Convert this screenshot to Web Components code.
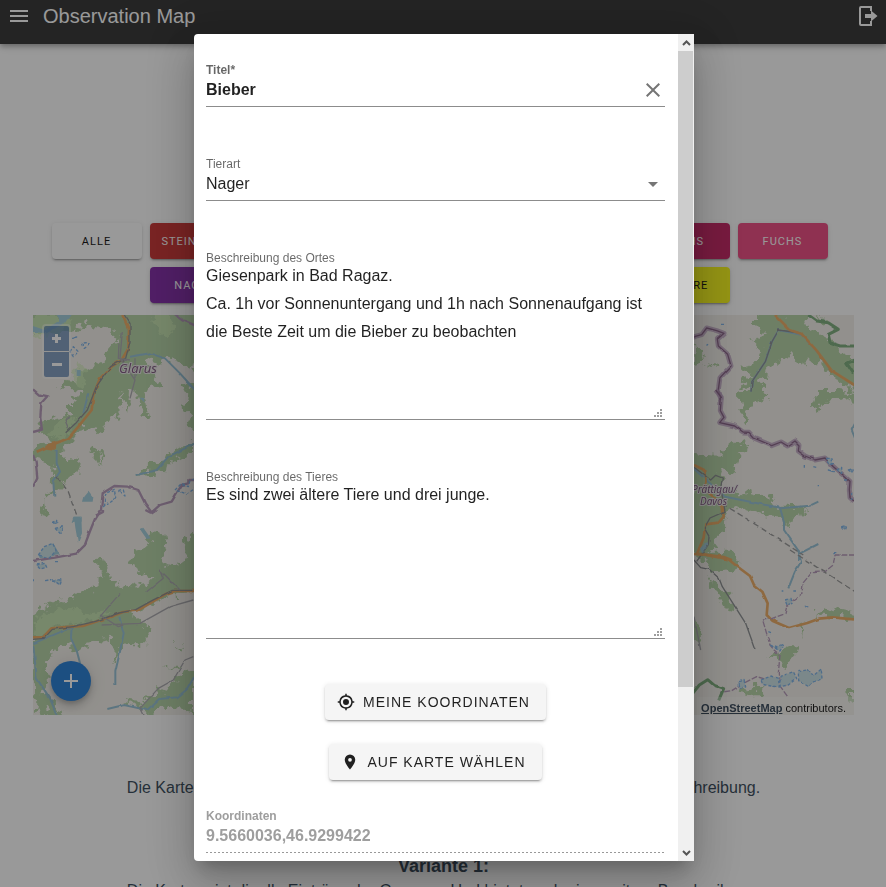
<!DOCTYPE html>
<html lang="de">
<head>
<meta charset="utf-8">
<meta name="viewport" content="width=device-width, initial-scale=1">
<title>Observation Map</title>
<style>
html, body { height: 100%; }
body { margin: 0; overflow: hidden; background: #fff; color: #2c3e50; font: 16px/24px "Liberation Sans", Arial, sans-serif; }
</style>
</head>
<body>
<observation-app></observation-app>
<script>
function define(name, html, setup) {
  const template = document.createElement('template');
  template.innerHTML = html;
  customElements.define(name, class extends HTMLElement {
    constructor() {
      super();
      this.attachShadow({ mode: 'open' }).append(template.content.cloneNode(true));
    }
    connectedCallback() { if (setup) setup(this, this.shadowRoot); }
  });
}

define('app-bar', `
<style>
:host { display: block; position: relative; background: #272727; color: #fff; box-shadow: 0 2px 4px -1px rgba(0,0,0,.2), 0 4px 5px rgba(0,0,0,.14), 0 1px 10px rgba(0,0,0,.12); }
header { display: flex; align-items: center; height: 32px; padding: 0 7px 12px 8px; gap: 13px; }
button { border: 0; padding: 0; background: none; color: inherit; width: 22px; height: 24px; display: grid; place-items: center; }
h1 { margin: 0; flex: 1; font-size: 20px; line-height: 24px; font-weight: 400; }
svg { display: block; fill: currentColor; }
</style>
<header>
  <button aria-label="Menü"><svg width="18" height="12" viewBox="0 0 18 12"><path d="M0 0h18v2H0zM0 5h18v2H0zM0 10h18v2H0z"/></svg></button>
  <h1><slot></slot></h1>
  <button aria-label="Abmelden"><svg width="20" height="20" viewBox="0 0 20 20"><path d="M14 0H3Q1 0 1 2v16q0 2 2 2h11v-5h-2v3H3V2h9v3h2z"/><path d="M7 8h6V4.500l6.500 5.500-6.500 5.500V12H7z"/></svg></button>
</header>`);

define('filter-button', `
<style>
:host { display: block; }
button { width: 100%; height: 36px; border: 0; border-radius: 4px; padding: 2px 12px 0; overflow: hidden; white-space: nowrap; background: var(--fill, #fff); color: var(--ink, #fff); font: 11px/16px Roboto, sans-serif; letter-spacing: 1px; box-shadow: 0 3px 1px -2px rgba(0,0,0,.2), 0 2px 2px rgba(0,0,0,.14), 0 1px 5px rgba(0,0,0,.12); }
</style><button><slot></slot></button>`);

define('filter-bar', `
<style>
:host { display: grid; grid-template-columns: repeat(8, 90px); justify-content: center; gap: 8px; padding-right: 8px; }
</style><slot></slot>`);

define('terrain-map', `
<style>
:host { display: block; position: relative; height: 400px; background: #f2efe9; overflow: hidden; }
.terrain { display: block; width: 100%; height: 100%; }
.zoom { position: absolute; left: 9px; top: 9px; padding: 2px; border-radius: 4px; background: rgba(255,255,255,.4); display: grid; gap: 1px; }
.zoom button { width: 25px; height: 25px; border: 0; padding: 0; background: rgba(0,60,136,.5); color: #fff; display: grid; place-items: center; }
.zoom button:first-child { border-radius: 2px 2px 0 0; }
.zoom button:last-child { border-radius: 0 0 2px 2px; }
.add { position: absolute; left: 18px; bottom: 14px; width: 40px; height: 40px; border: 0; padding: 0; border-radius: 50%; background: #1976d2; color: #fff; display: grid; place-items: center; box-shadow: 0 3px 5px -1px rgba(0,0,0,.2), 0 6px 10px rgba(0,0,0,.14), 0 1px 18px rgba(0,0,0,.12); }
button svg { fill: currentColor; display: block; }
.credit { position: absolute; right: 0; bottom: 0; padding: 4px 8px 0 4px; background: rgba(255,255,255,.3); color: #000; font-size: 11px; line-height: 14px; white-space: nowrap; }
.credit a { color: #2c3e50; font-weight: 700; }
.wood { fill: #b0d0a0; stroke: none; }
.meadow { fill: #cdebb0; opacity: .6; }
.water { stroke: #8fbdd2; fill: none; stroke-width: 6; }
.lake { fill: #9cc9d8; stroke: none; }
.edge { stroke: #b093b4; stroke-width: 7; fill: none; }
.wide { stroke: #ae8fb3; stroke-width: 15; opacity: .7; fill: none; }
.thin { stroke: #80597f; stroke-width: 4; fill: none; }
.road { stroke: #eba75c; stroke-width: 8; fill: none; }
.casing { stroke: #85888b; stroke-width: 4; fill: none; }
.minor { stroke: #a6a5aa; stroke-width: 4; fill: none; }
.glacier { stroke: #77aee5; stroke-width: 4; stroke-dasharray: 9 6; fill: #c8dfe3; }
.dash { stroke: #929292; stroke-width: 4; stroke-dasharray: 18 10; fill: none; }
.park { stroke: #75a975; stroke-width: 9; fill: none; }
text { font-family: "Noto Sans", sans-serif; font-style: italic; font-weight: 400; fill: #775078; stroke: #e8e5e5; stroke-width: 2px; paint-order: stroke; }
</style>
<svg class="terrain" viewBox="33 315 821 400" preserveAspectRatio="none" aria-label="Karte" stroke-linejoin="round" stroke-linecap="butt">
<defs>
<filter id="rough" x="-5%" y="-5%" width="110%" height="110%"><feTurbulence type="fractalNoise" baseFrequency=".11" numOctaves="3" seed="8"/><feDisplacementMap in="SourceGraphic" scale="17" xChannelSelector="R" yChannelSelector="G"/></filter>
<filter id="wobble" color-interpolation-filters="sRGB"><feTurbulence type="fractalNoise" baseFrequency=".12" numOctaves="1" seed="3"/><feDisplacementMap in="SourceGraphic" scale="3" xChannelSelector="R" yChannelSelector="G"/></filter>
</defs>
<g filter="url(#rough)">
<g transform="translate(20 310) scale(.33333)">
<path class="wood" d="M20 0H540V175L490 165 440 150 380 160 400 205 430 225 390 235 375 265 388 320 362 310 350 245 330 235 328 305 310 285 300 240 298 325 255 335 235 370 190 350 160 390 130 410 120 440 180 445 175 490 130 510 118 545 75 565 80 610 60 625 70 575 98 535 100 465 40 450V420L90 385 60 350 75 330 150 315 150 280 195 240 110 235 140 210 180 215 170 185 230 170 240 150 295 85 262 60 200 45 150 60 30 75Z"/>
<path class="wood" d="M490 225 540 220V370L500 350 515 320 480 290 510 265ZM350 500 400 455 440 440 522 390V420L460 455 410 497ZM218 405l25 15-5 45-20-10ZM238 430l15 20-5 15Z"/>
<path class="meadow" d="M30 15h90l40 20-50 35-80 15ZM150 190l30-30 20 30-5 40-25-15ZM90 370l30-40 50-10-20 50-30 20ZM400 15h40l30 50-40 10Z"/>
</g>
<g transform="translate(20 510) scale(.33333)">
<path class="wood" d="M30 325 100 280 170 260 225 225 250 200 225 150 250 145 270 205 320 230 390 215 400 205 330 165 345 120 385 110 390 65 430 70 440 125 430 160 480 175 500 90 540 40V255L430 260 380 290 330 310 380 350 390 400 320 400 280 460 285 400 275 380 200 400 165 425 150 400 100 425 75 460 90 500 65 540 105 570 135 620H90L40 560Z"/>
<path class="wood" d="M305 570 360 575 430 540 522 470V600L430 590 390 620 370 595ZM465 405l25 5-12 15ZM430 470l45 0-10 8ZM40 600l20-10-5 20Z"/>
<path class="meadow" d="M50 320l120-30 20 25 90-15-60 30-120 20-60 30Z"/>
</g>
<g transform="translate(675 210) scale(.33333)">
<path class="wood" d="M240 310H470L400 320 390 345 465 390 550 470V550L490 510 450 480 400 440 380 470 350 430 300 470 260 500 255 575 195 575 220 530 190 530 225 490 200 465 240 455 250 410 230 390 270 375 240 345Z"/>
<path class="wood" d="M50 400 90 435 55 480ZM90 460l45 5-15 8ZM420 315l40 20-20 10Z"/>
</g>
<g transform="translate(675 390) scale(.33333)">
<path class="wood" d="M190 0h65l30 20-60 25-5 55-15-10-10-40ZM410 50 430 0h60l60 10v25l-50-15-40 10-30 30ZM40 195 130 200 180 155 210 155 220 180 190 190 180 245 130 240 150 300 220 305 290 325 310 350 380 350 400 365 350 385 340 425 320 380 260 375 190 350 150 370 160 395 130 430 120 470 80 500 50 490Z"/>
</g>
<g transform="translate(675 550) scale(.33333)">
<path class="wood" d="M50 5h120l30 35-30 15-55 10-20-30-40-15ZM50 190l35 60-20 30-25-20ZM410 200l60-30 80 20v20l-100-10ZM100 80l70 60 5 40-25-5-40-70ZM280 320l80-35 10 20-40 35ZM190 430l50-30 30 10-30 30ZM510 420h30v30ZM378 230l12 5-2 20Z"/>
</g></g>
<g filter="url(#wobble)">
<g transform="translate(20 310) scale(.33333)">
<path class="lake" d="M30 45 75 60 120 30 110 15h45l-15 20-60 35-50-5ZM190 560l15-18 15 20-2 13h-32ZM160 620h25v15h-30ZM170 180h12v18h-12ZM358 263h20l-5 14Z"/>
<path class="water" d="M110 420v40l10 25-20 30 3 45M350 495l60-15 35-40 80-40M330 140l60-10 45 15 45 45 45 50M205 250l-15 60"/>
<path class="edge" d="M39 238l18 16 25 5-18 20-3 45 5 35-27 7M39 435l8 20 5 50-13 25M225 630l18-30 5-50 35-22 40 2 32 10 20 40 20 27 25-22 35-10 30-50 20-5v-10h40M465 13l25 18 35 15"/>
<path class="road" d="M307 15l20 45-2 55-20 35-30 20-35 35-20 50-5 45-40 50-30 35-50 20-45 20"/>
<path class="lake" style="fill:#eba75c" d="M75 405l35-12-3 30-25-3Z"/>
<path class="casing" d="M313 15l17 25v55l-13 50-45 25-43 60-27 70-35 40-30 28"/>
<path class="minor" d="M307 65l-7 80 45 65-15 55M345 145v60M145 355l-10-25 15-10M330 150l-35-5 2-45"/>
<path class="dash" d="M110 500l35 45 25 70"/>
<g class="glacier" style="fill:none"><path d="M150 125l10-15 15 15-15 15ZM185 100l8 15 15-10-10-7ZM155 85l15-4ZM250 590l8-40 25-12 4 25-22 15ZM295 545l15-5 5 18ZM465 540l20-20 20 10 5-18 20-10v30l-30 20Z"/></g>
</g>
<g transform="translate(20 510) scale(.33333)">
<path class="edge" d="M39 153l65-10 65-12 25-25 15-40 20-50 20-10V0M376 0l16 8 14-8"/>
<path class="lake" d="M162 20h22l2 50-12 28-8-45ZM55 135l45-35 20 35-60 10ZM360 58l10-5 22 32-12 2Z"/>
<path class="water" d="M155 350l-2 35 18 40 12 45M298 320l13 50-10 50-15 65v40M40 405l10 100 40 60 20 50M40 400l120-50M262 597l50-12 70 15 35-33 55-5 30-25 20-35"/>
<path class="road" d="M39 382h30l25-27 60-5 35-2 90-30 30-12 45-5 85-50 25-8h60"/>
<path class="casing" d="M39 388l33-3 25-27 65-9 65-15 70-25 50-10 50-28 60-30h60"/>
<path class="minor" d="M240 320l60-70M245 345l115-5 90-50 70-20M380 245l50-40-10-25 60 60M240 315l55 35 15-5M360 595l55-60 45-25 35-60 25-10M360 590l12 25"/>
<g class="glacier"><path d="M55 135l18-25 25-10 10 22-20 22ZM105 55l25-5-10 20ZM98 38l15-7v10ZM50 165l25-5 5 12-20 5ZM75 212l20-3ZM100 210l25 0-5 15ZM40 205v10M105 155h15"/></g>
</g>
<g transform="translate(675 210) scale(.33333)">
<path class="wide" d="M50 382l30-8 15-20 30 8 22 8-20 18 3 20 28 25 10 35-33 35-5 35 8 32"/><path class="thin" d="M50 382l30-8 15-20 30 8 22 8-20 18 3 20 28 25 10 35-33 35-5 35 8 32"/>
<path class="water" d="M228 545l3-30 40-60 20-60 20-35 70 15 50 55 40 55"/><path class="casing" d="M228 545l3-30 40-60 20-60 20-35 65 9"/>
<path class="road" d="M300 315l45 45 35 12 45 50 45 60 68 43"/>
<path class="park" d="M400 315l25 18 35 5 30 20-30 15 5 25 30 10h45M540 450l-25 10 20 30"/><path class="glacier" d="M95 410l5-8M138 343h10"/>
</g>
<g transform="translate(675 390) scale(.33333)">
<path class="wide" d="M122 0l17 22-3 40 11 20-13 16 45 10 25 18 18 1 15 17 53 23 28-11 20 12 22-15 12 12-2 18 20 15 30 12 30-6 25 26 30 26 20 18-2 25 2 24 12 10"/><path class="thin" d="M122 0l17 22-3 40 11 20-13 16 45 10 25 18 18 1 15 17 53 23 28-11 20 12 22-15 12 12-2 18 20 15 30 12 30-6 25 26 30 26 20 18-2 25 2 24 12 10"/>
<path class="water" d="M55 235l55 50 40 35 75 15 90 18 12 42 0 25 45 65v25M315 355l90-8 25-12M375 490l55-28M540 100l-10 20 12 30"/>
<path class="road" d="M57 225l30 15 5 35-7 20 35 30 23 25 3 30-15 18-40 5-5 40-20 48 80 10 25 10"/>
<path class="casing" d="M57 232l50 38 15-14 20 8-5 30 8 40 5 30-45 20-17 30 14 25-2 25-35 50"/>
<path class="dash" d="M140 340l65 40 180 115"/><path class="lake" d="M75 475l22-20 3 10-18 25Z"/>
<g class="glacier"><path d="M455 205l15 0 5 15-10 5ZM460 240l15 5ZM485 240l15-8v18ZM520 240l12-4-2 12ZM510 270l15 0M388 225v8M415 230l12 3M430 285v4M500 410l12-3-3 12ZM530 310v20"/></g>
</g>
<g transform="translate(675 550) scale(.33333)">
<path class="road" d="M55 12l40 3 65 13 25 20 40 30 12 27 25 20 16 35-3 35 17 17 50 22 55-15 35-13 40-4 65 6"/>
<path class="casing" d="M57 30l20 23 25 5 30 27 10 25 70 110 28 78"/><path class="minor" d="M57 200l20 100"/>
<path class="water" d="M370 0l8 35-18 30-20 50"/>
<path class="edge" style="stroke-width:4;stroke-dasharray:18 5" d="M540 15l-60 0-5 30-25 20-40 3-25 30-5 35-25 18-20 20-5 20-40 15-27 4 22 75 12 15 18 15-5 55 3 35 25 35M335 405l-90-25-40 20-35 22-35 5"/>
<path class="dash" d="M345 0l195 125"/>
<g class="glacier"><path d="M333 150l15-5 3 15-12 5ZM258 390l30-12 22 8 3 25-25-3-25-5ZM315 380l40-15 10 20-25 20-25 5ZM370 365l30-6 15 18 24-20 2 30-25 8-15 15-30-18ZM192 395l15-4 5 20-18 3ZM285 285l20 8 22-8-12 18ZM320 123l5 0M355 123l8 0M392 168l8 3M475 8h10M280 245l8 3"/></g>
<path class="park" d="M53 430l20-25 25-16 20 17 28 10-15 35"/>
</g></g>
<text x="119" y="373" font-size="13">Glarus</text>
<text x="692" y="493" font-size="10">Prättigau/</text><text x="700" y="505" font-size="10">Davos</text>
</svg>
<div class="zoom"><button aria-label="Vergrössern"><svg width="11" height="11" viewBox="0 0 11 11"><path d="M4 1h3v3h3v3H7v3H4V7H1V4h3z"/></svg></button><button aria-label="Verkleinern"><svg width="11" height="11" viewBox="0 0 11 11"><path d="M1 4h10v3H1z"/></svg></button></div>
<button class="add" aria-label="Eintrag hinzufügen"><svg width="14" height="14" viewBox="0 0 14 14"><path d="M6 0h2v6h6v2H8v6H6V8H0V6h6z"/></svg></button>
<div class="credit"><a href="#osm">OpenStreetMap</a> contributors.</div>`);

const fieldStyle = `
:host { display: block; }
.field { display: flex; flex-direction: column; position: relative; border-bottom: 1px solid #8c8c8c; }
label { font-size: 12px; line-height: 18px; color: rgba(0,0,0,.6); }
input, textarea, select { border: 0; margin: 0; padding: 0; outline: 0; border-radius: 0; background: none; color: rgba(0,0,0,.87); font: inherit; font-size: 16px; width: 100%; box-sizing: border-box; opacity: 1; }
.row { display: flex; align-items: center; height: 21px; padding-bottom: 6px; }
svg { display: block; fill: #757575; }`;

define('text-field', `
<style>${fieldStyle}
:host, label, input { font-weight: 700; }
button { border: 0; padding: 0; width: 24px; height: 24px; flex: none; background: none; display: grid; place-items: center; }
:host([disabled]) label, :host([disabled]) input { color: #9e9e9e; }
:host([disabled]) button { display: none; }
:host([disabled]) .field { border-bottom: 0; padding-bottom: 1px; background: repeating-linear-gradient(90deg, #999 0 2px, transparent 2px 4px) left bottom / 100% 1px no-repeat; }
</style>
<div class="field"><label for="value"></label><div class="row"><input id="value"><button aria-label="Leeren"><svg width="14" height="14" viewBox="0 0 14 14"><path d="M1.400 0 7 5.600 12.600 0 14 1.400 8.400 7l5.600 5.600-1.400 1.400L7 8.400 1.400 14 0 12.600 5.600 7 0 1.400z"/></svg></button></div></div>`,
(host, root) => {
  root.querySelector('label').textContent = host.getAttribute('label');
  const input = root.querySelector('input');
  input.value = host.getAttribute('value');
  input.disabled = host.hasAttribute('disabled');
  root.querySelector('button').onclick = () => { input.value = ''; };
});

define('select-field', `
<style>${fieldStyle}
select { appearance: none; }
.row svg { position: absolute; right: 7px; bottom: 13px; pointer-events: none; }
</style>
<div class="field"><label for="value"></label><div class="row"><select id="value"><option></option></select><svg width="10" height="5" viewBox="0 0 10 5"><path d="M0 0h10L5 5z"/></svg></div></div>`,
(host, root) => {
  root.querySelector('label').textContent = host.getAttribute('label');
  root.querySelector('option').textContent = host.getAttribute('value');
});

define('area-field', `
<style>${fieldStyle}
textarea { display: block; height: 157px; margin-top: -5px; line-height: 28px; resize: none; overflow: hidden; }
svg { position: absolute; right: 2px; bottom: 1px; }
</style>
<div class="field"><label for="value"></label><textarea id="value"></textarea><svg width="9" height="9" viewBox="0 0 9 9"><path d="M6 0h2v2H6zM3 3h2v2H3zM6 3h2v2H6zM0 6h2v2H0zM3 6h2v2H3zM6 6h2v2H6z" opacity=".7"/></svg></div>`,
(host, root) => {
  root.querySelector('label').textContent = host.getAttribute('label');
  root.querySelector('textarea').value = host.getAttribute('value');
});

define('raised-button', `
<style>
:host { display: block; }
button { display: flex; align-items: center; gap: 8px; height: 36px; padding: 0 16px 0 12px; border: 0; border-radius: 4px; background: #f5f5f5; color: rgba(0,0,0,.87); font: 14px/20px "Liberation Sans", Arial, sans-serif; letter-spacing: 1px; box-shadow: 0 3px 1px -2px rgba(0,0,0,.2), 0 2px 2px rgba(0,0,0,.14), 0 1px 5px rgba(0,0,0,.12); }
::slotted(svg) { width: 18px; height: 18px; fill: currentColor; flex: none; }
</style>
<button><slot name="icon"></slot><slot></slot></button>`);

define('scroll-dialog', `
<style>
:host { position: fixed; inset: 0; display: flex; justify-content: center; padding: 34px 0 26px 2px; background: rgba(33,33,33,.46); }
section { display: flex; width: 100%; max-width: 500px; background: #fff; border-radius: 4px 0 0 4px; overflow: hidden; box-shadow: 0 11px 15px -7px rgba(0,0,0,.2), 0 24px 38px 3px rgba(0,0,0,.14), 0 9px 46px 8px rgba(0,0,0,.12); }
.body { flex: 1; min-width: 0; overflow-y: auto; scrollbar-width: none; padding: 27px 13px 12px 12px; }
.track { width: 16px; flex: none; display: flex; flex-direction: column; background: #f0f0f0; }
.arrow { height: 17px; display: grid; place-items: center; }
.rail { flex: 1; }
.thumb { height: calc(80% + 2px); margin-right: 1px; background: #cdcdcd; }
svg { fill: none; stroke: #555; stroke-width: 2; }
</style>
<section role="dialog" aria-label="Eintrag">
<div class="body"><slot></slot></div>
<div class="track" aria-hidden="true"><div class="arrow"><svg width="9" height="6" viewBox="0 0 9 6"><path d="M1 5 4.500 1.500 8 5"/></svg></div><div class="rail"><div class="thumb"></div></div><div class="arrow"><svg width="9" height="6" viewBox="0 0 9 6"><path d="M1 1 4.500 4.500 8 1"/></svg></div></div>
</section>`);

define('observation-app', `
<style>
:host { display: block; }
main { padding: 179px 32px 0 33px; }
terrain-map { margin-top: 12px; }
.intro { text-align: center; padding-top: 61px; }
p { margin: 0; white-space: nowrap; }
h3 { margin: 54px 0 1px; font-size: 18px; line-height: 24px; }
.fields { display: grid; gap: 48px; }
.actions { display: flex; flex-direction: column; align-items: center; gap: 24px; padding: 45px 0 27px; }
</style>
<app-bar>Observation Map</app-bar>
<main>
<filter-bar>
<filter-button style="--ink:#000">ALLE</filter-button>
<filter-button style="--fill:#c62828">STEINBOCK</filter-button>
<filter-button style="--fill:#c2185b; grid-column:7">LUCHS</filter-button>
<filter-button style="--fill:#ec407a">FUCHS</filter-button>
<filter-button style="--fill:#7b1fa2; grid-column:2">NAGER</filter-button>
<filter-button style="--fill:#f7f70c; --ink:#000; grid-column:7">ANDERE</filter-button>
</filter-bar>
<terrain-map></terrain-map>
<div class="intro">
<p>Die Karte zeigt dir alle Einträge der Gruppen. Und bietet auch eine weitere Beschreibung.</p>
<h3>Variante 1:</h3>
<p>Die Karte zeigt dir alle Einträge der Gruppen. Und bietet auch eine weitere Beschreibung.</p>
</div>
</main>
<scroll-dialog>
<div class="fields">
<text-field label="Titel*" value="Bieber"></text-field>
<select-field label="Tierart" value="Nager"></select-field>
<area-field label="Beschreibung des Ortes" value="Giesenpark in Bad Ragaz.&#10;Ca. 1h vor Sonnenuntergang und 1h nach Sonnenaufgang ist die Beste Zeit um die Bieber zu beobachten"></area-field>
<area-field label="Beschreibung des Tieres" value="Es sind zwei ältere Tiere und drei junge."></area-field>
</div>
<div class="actions">
<raised-button><svg slot="icon" viewBox="0 0 24 24"><path d="M12 8a4 4 0 1 0 0 8 4 4 0 0 0 0-8m8.940 3A9 9 0 0 0 13 3.060V1h-2v2.060A9 9 0 0 0 3.060 11H1v2h2.060A9 9 0 0 0 11 20.940V23h2v-2.060A9 9 0 0 0 20.940 13H23v-2zM12 19a7 7 0 1 1 0-14 7 7 0 0 1 0 14"/></svg>MEINE KOORDINATEN</raised-button>
<raised-button><svg slot="icon" viewBox="0 0 24 24"><path d="M12 2a7 7 0 0 0-7 7c0 5.250 7 13 7 13s7-7.750 7-13a7 7 0 0 0-7-7m0 9.500a2.500 2.500 0 1 1 0-5 2.500 2.500 0 0 1 0 5"/></svg>AUF KARTE WÄHLEN</raised-button>
</div>
<text-field label="Koordinaten" value="9.5660036,46.9299422" disabled></text-field>
</scroll-dialog>`);
</script>
</body>
</html>
